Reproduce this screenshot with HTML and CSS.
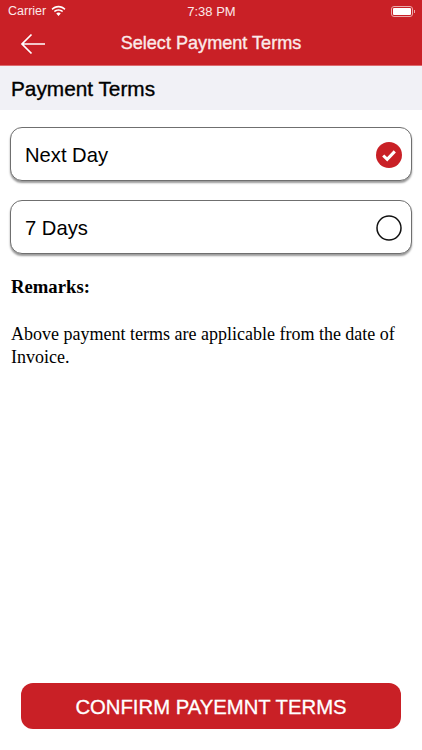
FILE: index.html
```html
<!DOCTYPE html>
<html lang="en">
<head>
	<meta charset="UTF-8">
	<title>Select Payment Terms</title>
	<link rel="stylesheet" href="styles.css">
</head>
<body>
	<div class="page">
		<div class="header">
			<div class="status">
				<div class="status-left">
					<span>Carrier</span>
					<svg class="wifi" width="15" height="12" viewBox="0 0 16 12">
						<path d="M8 2.200c2.500 0 4.700 1 6.300 2.600l1.100-1.200C13.500 1.700 10.900.5 8 .5S2.500 1.700.6 3.600l1.100 1.200C3.300 3.200 5.500 2.200 8 2.200z" fill="#fff"/>
						<path d="M8 5.800c1.500 0 2.800.6 3.800 1.500l1.100-1.200C11.600 4.900 9.900 4.100 8 4.100s-3.600.8-4.900 2l1.100 1.200c1-.9 2.300-1.500 3.800-1.500z" fill="#fff"/>
						<path d="M8 7.700c-1 0-1.800.4-2.400 1L8 11.300l2.400-2.600c-.6-.6-1.400-1-2.400-1z" fill="#fff"/>
					</svg>
				</div>
				<div class="status-time">7:38 PM</div>
				<div class="battery">
					<div class="battery-body"><div class="battery-fill"></div></div>
					<div class="battery-cap"></div>
				</div>
			</div>
			<div class="navbar">
				<svg class="back" width="26" height="22" viewBox="0 0 26 22">
					<path d="M25 11H2M11.500 1.500L2 11l9.500 9.500" fill="none" stroke="#fff" stroke-width="1.700"/>
				</svg>
				<div class="nav-title">Select Payment Terms</div>
			</div>
		</div>

		<div class="section-title">Payment Terms</div>

		<div class="options">
			<div class="option">
				<span class="option-label">Next Day</span>
				<svg width="26" height="26" viewBox="0 0 26 26">
					<circle cx="13" cy="13" r="13" fill="#c92026"/>
					<path d="M7.200 13.500l4 3.900 7.600-8" fill="none" stroke="#fff" stroke-width="3"/>
				</svg>
			</div>
			<div class="option">
				<span class="option-label">7 Days</span>
				<svg width="26" height="26" viewBox="0 0 26 26">
					<circle cx="13" cy="13" r="12" fill="none" stroke="#111" stroke-width="1.500"/>
				</svg>
			</div>
		</div>

		<div class="remarks">
			<p class="remarks-head">Remarks:</p>
			<p>Above payment terms are applicable from the date of Invoice.</p>
		</div>

		<div class="footer">
			<div class="confirm">CONFIRM PAYEMNT TERMS</div>
		</div>
	</div>
</body>
</html>
```
FILE: styles.css
```css
html,body{margin: 0;padding: 0;}
body{background-color: #fff;font-family: "Liberation Sans",Arial,sans-serif;color: #000;}
.page{display: flex;flex-direction: column;width: 422px;height: 750px;overflow: hidden;}

.header{background-color: #c92026;color: #fff;height: 65px;border-bottom: 1px solid #dd6a6e;}
.status{display: flex;justify-content: space-between;align-items: center;height: 22px;padding: 0 7px 0 8px;font-size: 12.500px;color: #fbe9e9;}
.status-left{display: flex;align-items: center;gap: 5px;width: 120px;}
.status-time{font-size: 13px;}
.battery{display: flex;align-items: center;justify-content: flex-end;width: 120px;gap: 1px;}
.battery-body{width: 18px;height: 7px;padding: 1px;border: 1px solid #eba9ab;border-radius: 3px;}
.battery-fill{width: 100%;height: 100%;background-color: #fff;border-radius: 1px;}
.battery-cap{width: 1px;height: 3px;background-color: #eba9ab;}
.navbar{display: flex;align-items: center;height: 43px;padding-left: 20px;}
.back{flex: none;}
.nav-title{flex: 1;padding-right: 46px;text-align: center;font-size: 18.100px;-webkit-text-stroke: .35px #fbeaea;color: #fbeaea;}

.section-title{background-color: #f1f1f6;height: 44px;line-height: 46px;padding-left: 11px;font-size: 20.800px;-webkit-text-stroke: .35px #000;}

.options{display: flex;flex-direction: column;gap: 19.500px;padding: 17.400px 10px 0 10px;}
.option{display: flex;justify-content: space-between;align-items: center;box-sizing: border-box;height: 53.500px;padding: 1px 9px 0 14px;background-color: #fff;border: 1px solid #6f6f6f;border-radius: 12px;box-shadow: 0 2px 2px rgba(0,0,0,.4);font-size: 20.200px;}
.option-label{padding-top: 2px;}

.remarks{padding: 0 11px;margin-top: 21px;font-family: "Liberation Serif","Times New Roman",serif;font-size: 18px;line-height: 23px;}
.remarks p{margin: 0;}
.remarks .remarks-head{font-size: 18.700px;font-weight: bold;margin-bottom: 25px;}

.footer{margin-top: auto;padding: 0 21px 21px 21px;}
.confirm{height: 46px;line-height: 48px;text-align: center;background-color: #c92026;border-radius: 12px;color: #fff;font-size: 20.300px;-webkit-text-stroke: .3px #fff;}
```
